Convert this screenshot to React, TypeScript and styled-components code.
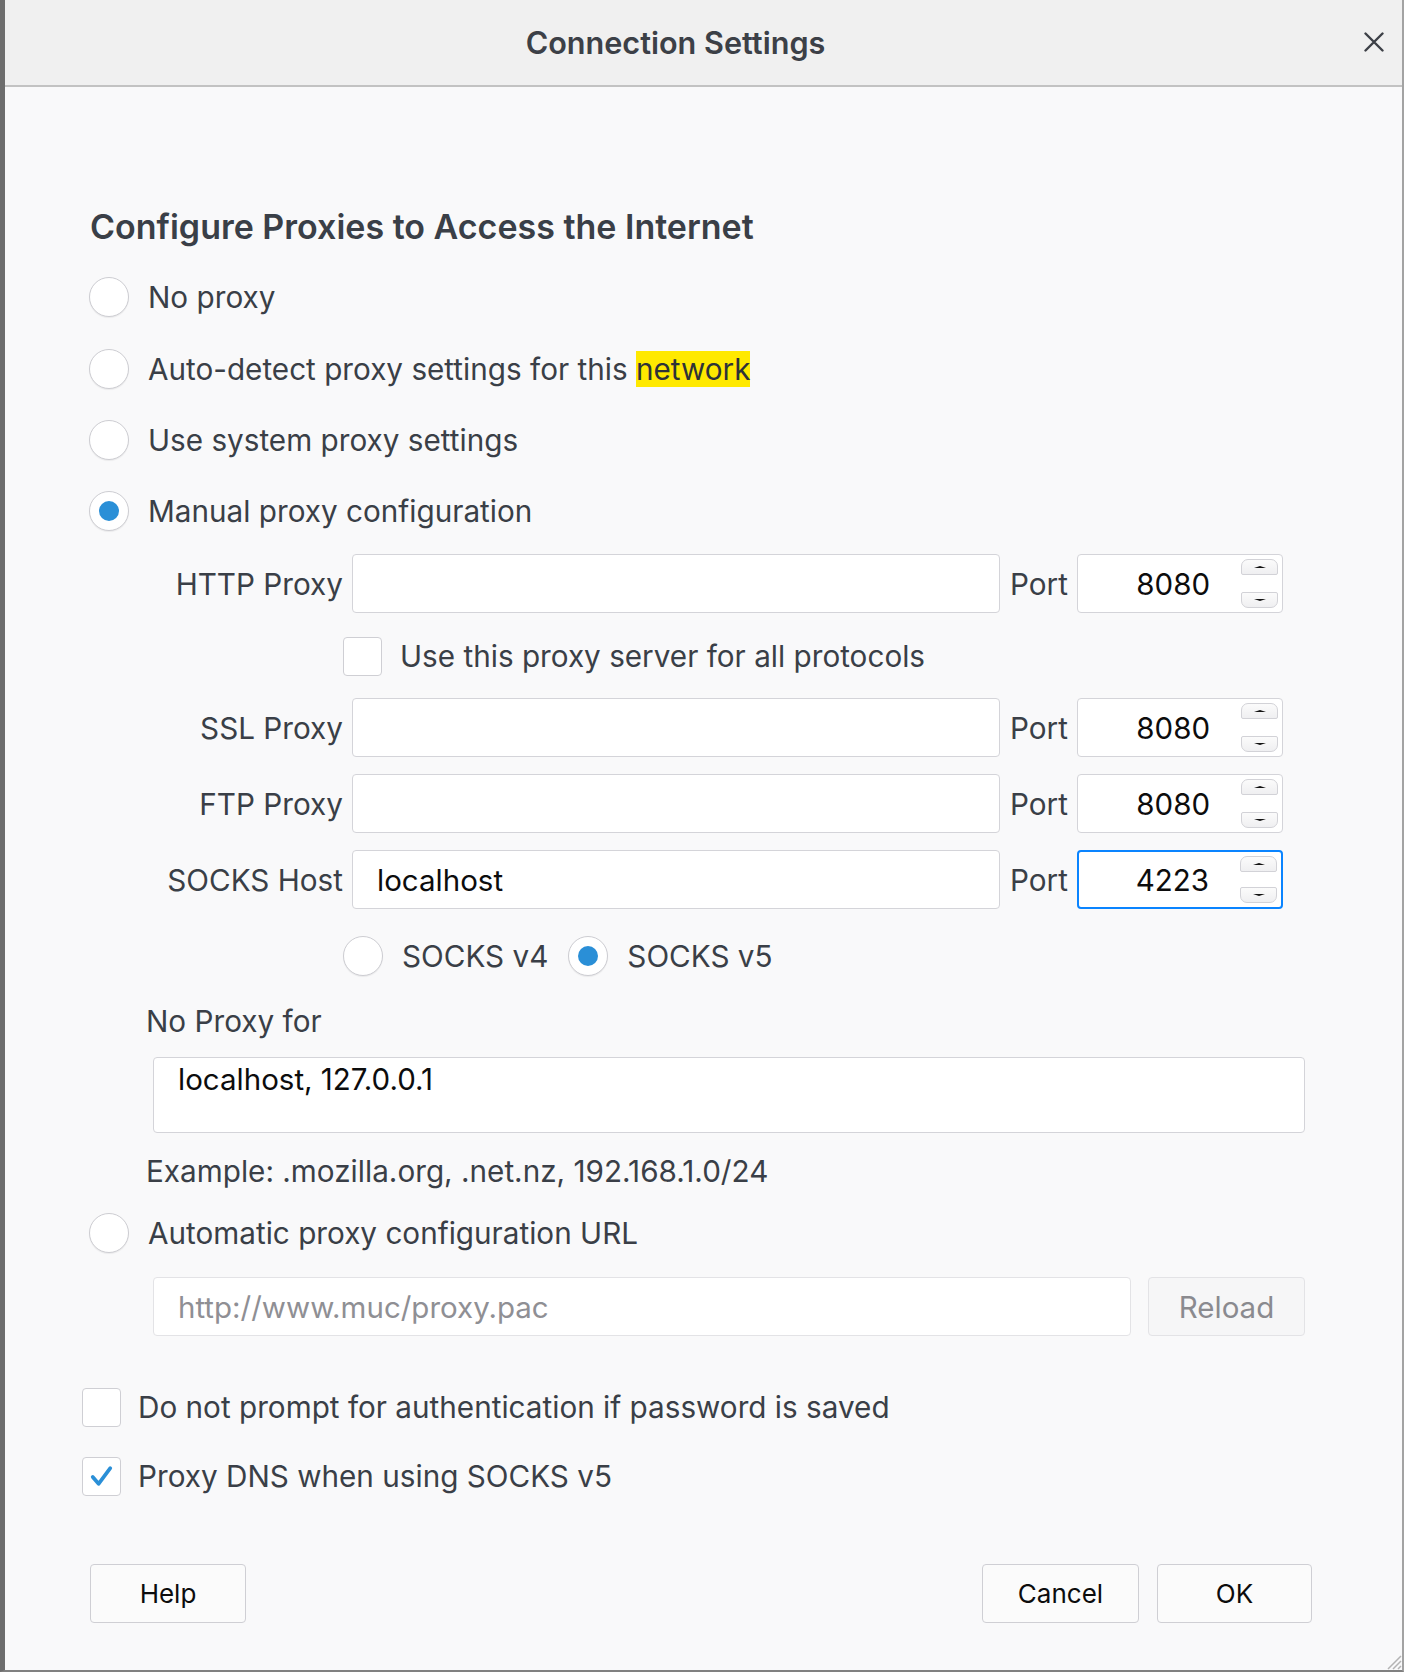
import React from "react";
import styled, { createGlobalStyle } from "styled-components";

const GlobalStyle = createGlobalStyle`
  html, body {
    margin: 0;
    padding: 0;
    background: #f9f9fa;
  }
  * {
    box-sizing: border-box;
  }
`;

const FONT = `Inter, "Noto Sans", "Liberation Sans", sans-serif`;
const TEXT = "#3a3f47";
const LABEL_SIZE = "29.7px";

const Window = styled.div`
  position: relative;
  width: 1404px;
  height: 1672px;
  display: flex;
  flex-direction: column;
  background: #f9f9fa;
  border-left: 5px solid #6d6d6d;
  border-right: 2px solid #a3a3a3;
  border-bottom: 2px solid #808080;
  font-family: ${FONT};
  color: ${TEXT};
  overflow: hidden;
`;

const TitleBar = styled.div`
  position: relative;
  height: 87px;
  flex: none;
  display: flex;
  align-items: center;
  justify-content: center;
  padding-right: 56px;
  background: #f0f0f0;
  border-bottom: 2px solid #c2c2c2;
`;

const Title = styled.div`
  font-size: 30.6px;
  font-weight: 600;
  color: #3c4047;
`;

const CloseButton = styled.button`
  position: absolute;
  right: 18px;
  top: 32px;
  width: 20px;
  height: 20px;
  padding: 0;
  border: none;
  background: none;
  display: flex;
`;

const Body = styled.div`
  display: flex;
  flex-direction: column;
  align-items: flex-start;
  padding: 120px 0 0 84px;
`;

const Heading = styled.h1`
  margin: 0 0 0 1px;
  font-size: 34px;
  line-height: 40px;
  font-weight: 600;
  color: #3a3f47;
`;

const Row = styled.div<{ $top: number; $left?: number }>`
  display: flex;
  align-items: center;
  margin-top: ${(p) => p.$top}px;
  margin-left: ${(p) => p.$left ?? 0}px;
`;

const Label = styled.span`
  font-size: ${LABEL_SIZE};
  line-height: 40px;
  white-space: nowrap;
`;

const RadioCircle = styled.span<{ $on?: boolean }>`
  width: 40px;
  height: 40px;
  flex: none;
  border-radius: 50%;
  background: #fff;
  border: 1.5px solid #cdcdd2;
  box-shadow: 0 1px 1px rgba(0, 0, 0, 0.06);
  display: flex;
  align-items: center;
  justify-content: center;

  &::after {
    content: "";
    display: ${(p) => (p.$on ? "block" : "none")};
    width: 20px;
    height: 20px;
    border-radius: 50%;
    background: #2a8fd7;
  }
`;

const RadioOption = styled.label<{ $gap?: number }>`
  display: flex;
  align-items: center;
  gap: ${(p) => p.$gap ?? 19}px;
`;

const Highlight = styled.span`
  background: #ffe900;
  color: #2e3238;
`;

const ProxyRow = styled.div<{ $top: number }>`
  display: flex;
  align-items: center;
  margin-top: ${(p) => p.$top}px;
`;

const ProxyLabel = styled.span`
  width: 254px;
  text-align: right;
  font-size: ${LABEL_SIZE};
  line-height: 40px;
  white-space: nowrap;
`;

const Field = styled.div<{ $width: number; $height?: number; $focus?: boolean }>`
  width: ${(p) => p.$width}px;
  height: ${(p) => p.$height ?? 59}px;
  flex: none;
  background: #fff;
  border: ${(p) => (p.$focus ? "2px solid #0a84ff" : "1.5px solid #d4d4d9")};
  border-radius: 4px;
  display: flex;
  align-items: center;
  padding: 0 24px;
  font-size: 29.5px;
  color: #0c0c0d;
  white-space: nowrap;
`;

const HostField = styled(Field)`
  margin-left: 9px;
`;

const PortLabel = styled.span`
  width: 58px;
  margin-left: 10px;
  margin-right: 9px;
  font-size: ${LABEL_SIZE};
  line-height: 40px;
`;

const PortField = styled(Field)`
  justify-content: flex-end;
  padding: 0 4px 0 0;
  gap: 31px;
`;

const Spinner = styled.div`
  height: 100%;
  display: flex;
  flex-direction: column;
  justify-content: space-between;
  padding: 4px 0;
`;

const SpinButton = styled.span<{ $down?: boolean }>`
  width: 37px;
  height: 16px;
  border: 1.5px solid #d2d2d7;
  border-radius: ${(p) => (p.$down ? "2px 2px 7px 7px" : "7px 7px 2px 2px")};
  background: linear-gradient(#fbfbfb, #efeff1);
  display: flex;
  align-items: center;
  justify-content: center;
`;

const CheckBox = styled.span`
  width: 39px;
  height: 39px;
  flex: none;
  background: #fff;
  border: 1.5px solid #cfcfd4;
  border-radius: 4px;
  display: flex;
  align-items: center;
  justify-content: center;
`;

const CheckOption = styled.label<{ $gap: number }>`
  display: flex;
  align-items: center;
  gap: ${(p) => p.$gap}px;
`;

const SubLabel = styled.div<{ $top: number; $left: number }>`
  margin-top: ${(p) => p.$top}px;
  margin-left: ${(p) => p.$left}px;
  font-size: ${LABEL_SIZE};
  line-height: 40px;
  white-space: nowrap;
`;

const TextArea = styled.div`
  margin-top: 16px;
  margin-left: 64px;
  width: 1152px;
  height: 76px;
  background: #fff;
  border: 1.5px solid #d4d4d9;
  border-radius: 4px;
  padding: 1px 24px;
  font-size: 29.5px;
  line-height: 40px;
  color: #0c0c0d;
`;

const UrlField = styled(Field)`
  border-color: #e3e3e6;
  color: #8f8f94;
  padding-left: 24px;
`;

const ReloadButton = styled.button`
  margin-left: 17px;
  width: 157px;
  height: 59px;
  border: 1.5px solid #e3e3e6;
  border-radius: 4px;
  background: #f6f6f7;
  font-family: ${FONT};
  font-size: 29.5px;
  color: #8a8a8f;
`;

const Footer = styled.div`
  margin-top: 68px;
  margin-left: 1px;
  width: 1222px;
  display: flex;
  justify-content: space-between;
`;

const ButtonGroup = styled.div`
  display: flex;
  gap: 18px;
`;

const DialogButton = styled.button<{ $width?: number }>`
  width: ${(p) => p.$width ?? 157}px;
  height: 59px;
  border: 1.5px solid #cfcfd4;
  border-radius: 4px;
  background: #fbfbfb;
  font-family: ${FONT};
  font-size: 26px;
  color: #0c0c0d;
`;

const Grip = styled.svg`
  position: absolute;
  right: 0;
  bottom: 0;
`;

const Radio = ({ on, children, gap }: { on?: boolean; children: React.ReactNode; gap?: number }) => (
  <RadioOption $gap={gap}>
    <RadioCircle $on={on} />
    <Label>{children}</Label>
  </RadioOption>
);

const Arrow = ({ down }: { down?: boolean }) => (
  <svg width="12" height="4" viewBox="0 0 12 4">
    {down ? (
      <path d="M0 1 H12 L6 3 Z" fill="#111" />
    ) : (
      <path d="M0 3 H12 L6 1 Z" fill="#111" />
    )}
  </svg>
);

const Port = ({ value, focus }: { value: string; focus?: boolean }) => (
  <PortField $width={206} $focus={focus}>
    <span>{value}</span>
    <Spinner>
      <SpinButton>
        <Arrow />
      </SpinButton>
      <SpinButton $down>
        <Arrow down />
      </SpinButton>
    </Spinner>
  </PortField>
);

const ProxyLine = ({ label, host, port, top, focus }: { label: string; host?: string; port: string; top: number; focus?: boolean }) => (
  <ProxyRow $top={top}>
    <ProxyLabel>{label}</ProxyLabel>
    <HostField $width={648}>{host}</HostField>
    <PortLabel>Port</PortLabel>
    <Port value={port} focus={focus} />
  </ProxyRow>
);

const Check = () => (
  <svg width="38" height="38" viewBox="0 0 38 38">
    <path d="M10 20 L16 27 L28 11" fill="none" stroke="#2a8fd7" strokeWidth="3.8" strokeLinecap="round" strokeLinejoin="round" />
  </svg>
);

export default function App() {
  return (
    <>
      <GlobalStyle />
      <Window>
        <TitleBar>
          <Title>Connection Settings</Title>
          <CloseButton aria-label="Close">
            <svg width="20" height="20" viewBox="0 0 20 20">
              <path d="M1.5 1.5 L18.5 18.5 M18.5 1.5 L1.5 18.5" stroke="#3d4047" strokeWidth="2.4" strokeLinecap="round" />
            </svg>
          </CloseButton>
        </TitleBar>

        <Body>
          <Heading>Configure Proxies to Access the Internet</Heading>

          <Row $top={30}>
            <Radio>No proxy</Radio>
          </Row>
          <Row $top={32}>
            <Radio>
              Auto-detect proxy settings for this <Highlight>network</Highlight>
            </Radio>
          </Row>
          <Row $top={31}>
            <Radio>Use system proxy settings</Radio>
          </Row>
          <Row $top={31}>
            <Radio on>Manual proxy configuration</Radio>
          </Row>

          <ProxyLine label="HTTP Proxy" port="8080" top={23} />
          <Row $top={23} $left={254}>
            <CheckOption $gap={18}>
              <CheckBox />
              <Label>Use this proxy server for all protocols</Label>
            </CheckOption>
          </Row>
          <ProxyLine label="SSL Proxy" port="8080" top={22} />
          <ProxyLine label="FTP Proxy" port="8080" top={17} />
          <ProxyLine label="SOCKS Host" host="localhost" port="4223" top={17} focus />

          <Row $top={27} $left={254}>
            <Radio>SOCKS v4</Radio>
            <span style={{ width: 20 }} />
            <Radio on>SOCKS v5</Radio>
          </Row>

          <SubLabel $top={25} $left={57}>No Proxy for</SubLabel>
          <TextArea>localhost, 127.0.0.1</TextArea>
          <SubLabel $top={18} $left={57}>Example: .mozilla.org, .net.nz, 192.168.1.0/24</SubLabel>

          <Row $top={22}>
            <Radio>Automatic proxy configuration URL</Radio>
          </Row>
          <Row $top={24} $left={64}>
            <UrlField $width={978}>http://www.muc/proxy.pac</UrlField>
            <ReloadButton>Reload</ReloadButton>
          </Row>

          <Row $top={51} $left={-7}>
            <CheckOption $gap={17}>
              <CheckBox />
              <Label>Do not prompt for authentication if password is saved</Label>
            </CheckOption>
          </Row>
          <Row $top={29} $left={-7}>
            <CheckOption $gap={17}>
              <CheckBox>
                <Check />
              </CheckBox>
              <Label>Proxy DNS when using SOCKS v5</Label>
            </CheckOption>
          </Row>

          <Footer>
            <DialogButton $width={156}>Help</DialogButton>
            <ButtonGroup>
              <DialogButton>Cancel</DialogButton>
              <DialogButton $width={155}>OK</DialogButton>
            </ButtonGroup>
          </Footer>
        </Body>

        <Grip width="18" height="18" viewBox="0 0 18 18">
          <path d="M17 4 L4 17 M17 9 L9 17 M17 14 L14 17" stroke="#b4b4b4" strokeWidth="1.5" />
        </Grip>
      </Window>
    </>
  );
}
